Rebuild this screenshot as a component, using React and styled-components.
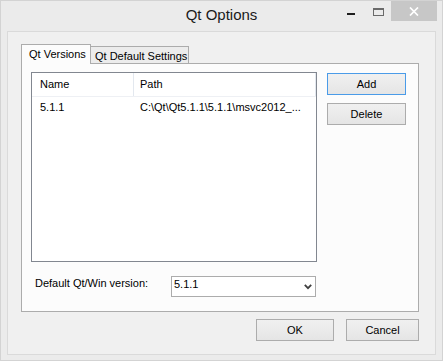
import React from "react";
import styled, { createGlobalStyle } from "styled-components";

const GlobalStyle = createGlobalStyle`
  html, body {
    margin: 0;
    padding: 0;
    background: #ebebeb;
  }
  * {
    box-sizing: border-box;
  }
`;

const font = `"Liberation Sans", Arial, sans-serif`;

function App() {
  return (
    <>
      <GlobalStyle />
      <Window>
        <TitleBar>
          <span />
          <Title>Qt Options</Title>
          <Controls>
            <MinIcon />
            <MaxIcon />
            <CloseButton>
              <svg width="10" height="9" viewBox="0 0 10 9">
                <path d="M1 0.5 L9 8.5 M9 0.5 L1 8.5" stroke="#fff" strokeWidth="1.7" />
              </svg>
            </CloseButton>
          </Controls>
        </TitleBar>

        <Client>
          <TabBar>
            <Tab active>Qt Versions</Tab>
            <Tab>Qt Default Settings</Tab>
          </TabBar>
          <Pane>
            <TopRow>
              <List>
                <ListHeader>
                  <HeadCell first>Name</HeadCell>
                  <HeadCell>Path</HeadCell>
                </ListHeader>
                <ListRow>
                  <Cell first>5.1.1</Cell>
                  <Cell>C:\Qt\Qt5.1.1\5.1.1\msvc2012_...</Cell>
                </ListRow>
              </List>
              <SideButtons>
                <Button $width={79} $focused>Add</Button>
                <Button $width={79}>Delete</Button>
              </SideButtons>
            </TopRow>
            <VersionRow>
              <Label>Default Qt/Win version:</Label>
              <Combo>
                <ComboText>5.1.1</ComboText>
                <svg width="8" height="6" viewBox="0 0 8 6">
                  <path d="M0.8 0.8 L4 4.2 L7.2 0.8" fill="none" stroke="#404040" strokeWidth="1.8" />
                </svg>
              </Combo>
            </VersionRow>
          </Pane>
          <DialogButtons>
            <Button $width={78}>OK</Button>
            <Button $width={73}>Cancel</Button>
          </DialogButtons>
        </Client>
      </Window>
    </>
  );
}

const Window = styled.div`
  width: 443px;
  height: 361px;
  background: #ebebeb;
  border: 1px solid #d3d3d3;
  display: flex;
  flex-direction: column;
  font-family: ${font};
  font-size: 11px;
  color: #000;
`;

const TitleBar = styled.div`
  height: 30px;
  display: grid;
  grid-template-columns: 1fr auto 1fr;
  align-items: start;
`;

const Title = styled.div`
  font-size: 15px;
  line-height: 17px;
  padding-top: 5px;
  color: #1a1a1a;
`;

const Controls = styled.div`
  display: flex;
  justify-content: flex-end;
  align-items: flex-start;
  padding-right: 5px;
`;

const MinIcon = styled.div`
  width: 8px;
  height: 2px;
  background: #1e1e1e;
  margin-top: 12px;
  margin-right: 18px;
`;

const MaxIcon = styled.div`
  width: 11px;
  height: 8px;
  border: 1px solid #6a6a6a;
  border-top-width: 2px;
  margin-top: 7px;
  margin-right: 7px;
`;

const CloseButton = styled.div`
  width: 46px;
  height: 20px;
  background: #c7c7c7;
  display: flex;
  align-items: center;
  justify-content: center;
`;

const Client = styled.div`
  margin: 0 6px 5px 6px;
  height: 324px;
  border: 1px solid #dadada;
  background: #f0f0f0;
  padding: 12px 16px 13px 13px;
  display: flex;
  flex-direction: column;
`;

const TabBar = styled.div`
  height: 19px;
  display: flex;
  align-items: flex-start;
`;

const Tab = styled.div`
  position: relative;
  white-space: nowrap;
  line-height: 13px;
  border: 1px solid #acacac;
  border-bottom: none;
  ${(p) =>
    p.active
      ? `
    z-index: 1;
    width: 70px;
    height: 20px;
    padding: 3px 0 0 7px;
    background: #fcfcfc;
  `
      : `
    width: 98px;
    height: 17px;
    margin-top: 2px;
    padding: 3px 0 0 4px;
    border-left: none;
    background: #ececec;
  `}
`;

const Pane = styled.div`
  height: 249px;
  border: 1px solid #acacac;
  background: #fcfcfc;
  padding: 8px 12px 14px 9px;
  display: flex;
  flex-direction: column;
  gap: 14px;
`;

const TopRow = styled.div`
  display: flex;
  gap: 10px;
`;

const List = styled.div`
  width: 286px;
  height: 190px;
  border: 1px solid #828790;
  background: #fff;
`;

const ListHeader = styled.div`
  display: flex;
  height: 24px;
  border-bottom: 1px solid #eef0f4;
`;

const HeadCell = styled.div`
  width: ${(p) => (p.first ? "102px" : "auto")};
  flex: ${(p) => (p.first ? "none" : "1")};
  padding: 5px 0 0 ${(p) => (p.first ? "8px" : "6px")};
  line-height: 13px;
  border-right: 1px solid #e3e8ef;
`;

const ListRow = styled.div`
  display: flex;
  height: 21px;
  padding-top: 4px;
  line-height: 13px;
  white-space: nowrap;
`;

const Cell = styled.div`
  width: ${(p) => (p.first ? "102px" : "auto")};
  padding-left: ${(p) => (p.first ? "8px" : "6px")};
`;

const SideButtons = styled.div`
  display: flex;
  flex-direction: column;
  gap: 8px;
  padding-top: 1px;
`;

const Button = styled.div`
  width: ${(p) => p.$width}px;
  height: 22px;
  border: 1px solid ${(p) => (p.$focused ? "#4a9be8" : "#acacac")};
  background: linear-gradient(#f0f0f0, #e5e5e5);
  display: flex;
  align-items: center;
  justify-content: center;
  line-height: 13px;
`;

const VersionRow = styled.div`
  display: flex;
  align-items: flex-start;
  padding-left: 4px;
`;

const Label = styled.div`
  width: 136px;
  line-height: 13px;
  padding-top: 1px;
`;

const Combo = styled.div`
  width: 145px;
  height: 21px;
  border: 1px solid #acacac;
  background: #fff;
  display: flex;
  justify-content: space-between;
  padding: 1px 3px 0 2px;

  svg {
    margin-top: 6px;
  }
`;

const ComboText = styled.div`
  line-height: 13px;
`;

const DialogButtons = styled.div`
  display: flex;
  justify-content: flex-end;
  gap: 12px;
  margin-top: 7px;
`;

export default App;
